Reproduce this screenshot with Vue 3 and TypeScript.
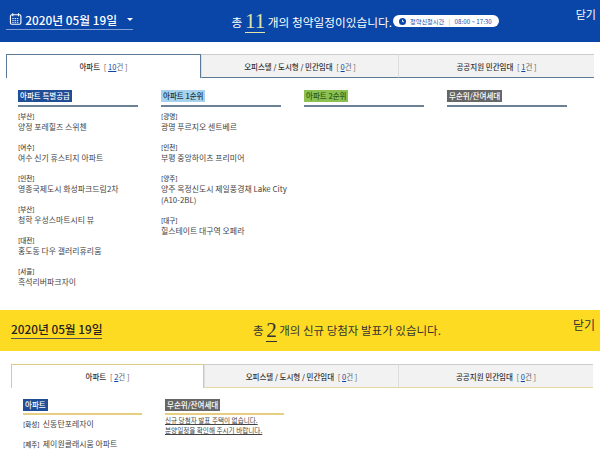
<template>
  <div class="page">
    <section class="band blue">
      <div class="date-select">
        <svg class="cal" width="14" height="14" viewBox="0 0 14 14" fill="none" stroke="#fff">
          <rect x="1.5" y="2.5" width="11" height="10" rx="1.5" stroke-width="1.2" />
          <path d="M4 1v3M10 1v3" stroke-width="1.2" />
          <path d="M3.5 6.5h7M3.5 8.5h7M3.5 10.5h7" stroke-width="1" stroke-dasharray="1.4 1" />
        </svg>
        <span>2020년 05월 19일</span>
        <i class="caret"></i>
      </div>
      <div class="summary">
        총 <b class="count">11</b> 개의 청약일정이있습니다.
        <span class="hours">
          <svg width="7" height="7" viewBox="0 0 8 8"><circle cx="4" cy="4" r="4" fill="#0a46a8" /><path d="M4 2v2.2h1.8" stroke="#fff" fill="none" /></svg>
          청약신청시간 <em>|</em> 08:00 ~ 17:30
        </span>
      </div>
      <span class="close">닫기</span>
    </section>

    <div class="panel first">
      <div class="tabs">
        <div v-for="(t, i) in blueTabs" :key="t.label" class="tab" :class="{ on: i === 0 }">
          {{ t.label }} <span class="n">[ <u>{{ t.n }}</u>건 ]</span>
        </div>
      </div>
      <div class="cols">
        <div v-for="c in blueCols" :key="c.title" class="col">
          <h4><span :class="c.tone">{{ c.title }}</span></h4>
          <div v-for="it in c.items" :key="it.name" class="item">
            <div class="region">[{{ it.region }}]</div>
            <div class="name">{{ it.name }}</div>
          </div>
        </div>
      </div>
    </div>

    <section class="band yellow">
      <div class="date-plain">2020년 05월 19일</div>
      <div class="summary">총 <b class="count">2</b> 개의 신규 당첨자 발표가 있습니다.</div>
      <span class="close">닫기</span>
    </section>

    <div class="panel second">
      <div class="tabs">
        <div v-for="(t, i) in yellowTabs" :key="t.label" class="tab" :class="{ on: i === 0 }">
          {{ t.label }} <span class="n">[ <u>{{ t.n }}</u>건 ]</span>
        </div>
      </div>
      <div class="cols">
        <div class="col">
          <h4><span class="navy">아파트</span></h4>
          <div class="row"><span class="region">[화성]</span> 신동탄포레자이</div>
          <div class="row"><span class="region">[제주]</span> 제이원클래시움 아파트</div>
        </div>
        <div class="col">
          <h4><span class="gray">무순위/잔여세대</span></h4>
          <p class="notice">신규 당첨자 발표 주택이 없습니다.<br />분양일정을 확인해 주시기 바랍니다.</p>
        </div>
      </div>
    </div>
  </div>
</template>

<script setup lang="ts">
interface Item {
  region: string;
  name: string;
}

const blueTabs = [
  { label: '아파트', n: 10 },
  { label: '오피스텔 / 도시형 / 민간임대', n: 0 },
  { label: '공공지원 민간임대', n: 1 }
];

const yellowTabs = [
  { label: '아파트', n: 2 },
  { label: '오피스텔 / 도시형 / 민간임대', n: 0 },
  { label: '공공지원 민간임대', n: 0 }
];

const blueCols: { title: string; tone: string; items: Item[] }[] = [
  {
    title: '아파트 특별공급',
    tone: 'navy',
    items: [
      { region: '부산', name: '양정 포레힐즈 스위첸' },
      { region: '여수', name: '여수 신기 휴스티지 아파트' },
      { region: '인천', name: '영종국제도시 화성파크드림2차' },
      { region: '부산', name: '청학 우성스마트시티 뷰' },
      { region: '대전', name: '홍도동 다우 갤러리휴리움' },
      { region: '서울', name: '흑석리버파크자이' }
    ]
  },
  {
    title: '아파트 1순위',
    tone: 'sky',
    items: [
      { region: '광명', name: '광명 푸르지오 센트베르' },
      { region: '인천', name: '부평 중앙하이츠 프리미어' },
      { region: '양주', name: '양주 옥정신도시 제일풍경채 Lake City (A10-2BL)' },
      { region: '대구', name: '힐스테이트 대구역 오페라' }
    ]
  },
  { title: '아파트 2순위', tone: 'green', items: [] },
  { title: '무순위/잔여세대', tone: 'gray', items: [] }
];
</script>

<style>
html,
body {
  margin: 0;
  background: #fff;
}
</style>

<style scoped>
.page {
  width: 600px;
  height: 455px;
  overflow: hidden;
  font-family: "Noto Sans CJK KR", "Liberation Sans", sans-serif;
  color: #444;
}

.band {
  position: relative;
  height: 42px;
  display: flex;
  align-items: center;
}

.blue {
  background: #0a46a8;
  color: #fff;
}

.yellow {
  height: 41px;
  background: #fedb23;
  color: #333;
}

.date-select {
  position: absolute;
  left: 6px;
  top: 9px;
  width: 127px;
  height: 21px;
  box-sizing: border-box;
  padding-left: 3px;
  display: flex;
  align-items: center;
  gap: 3px;
  font-size: 11.8px;
  font-weight: 500;
  white-space: nowrap;
  border-bottom: 1px solid #7f9fd6;
}

.caret {
  margin-left: 7px;
  border: 3px solid transparent;
  border-top: 3px solid #fff;
  border-bottom: 0;
}

.date-plain {
  position: absolute;
  left: 11px;
  top: 8px;
  width: 91px;
  height: 21px;
  font-size: 11.8px;
  font-weight: 500;
  line-height: 21px;
  white-space: nowrap;
  color: #222;
  border-bottom: 1px solid #555;
  box-sizing: border-box;
}

.summary {
  display: flex;
  align-items: center;
  font-size: 11.7px;
  white-space: pre;
}

.blue .summary {
  margin-left: 229px;
}

.yellow .summary {
  margin-left: 253px;
  margin-top: -1px;
  font-size: 11.5px;
}

.count {
  font-family: "Liberation Serif", serif;
  font-size: 21px;
  font-weight: 400;
  line-height: 22px;
  border-bottom: 1px solid currentColor;
}

.blue .count {
  color: #dfe6a8;
  font-size: 21px;
}

.hours {
  margin-left: -2px;
  height: 12px;
  padding: 0 6px;
  display: inline-flex;
  align-items: center;
  gap: 3px;
  border-radius: 6px;
  background: #fff;
  color: #0a46a8;
  font-size: 6.2px;
}

.hours em {
  font-style: normal;
  color: #aaa;
}

.close {
  position: absolute;
  right: 4px;
  top: 6px;
  font-size: 11px;
  line-height: 16px;
}

.yellow .close {
  right: 5px;
  top: 7px;
  font-size: 12px;
}

.tabs {
  display: grid;
  grid-template-columns: 195px 197px 1fr;
  height: 24px;
  margin-left: 6px;
  margin-right: 6px;
}

.tab {
  display: flex;
  align-items: center;
  justify-content: center;
  gap: 2px;
  font-size: 7.5px;
  font-weight: 500;
  color: #333;
  background: #f2f2f2;
  border-top: 1px solid #ccc;
  border-left: 1px solid #ddd;
  border-bottom: 1px solid #5c7a94;
  white-space: pre;
}

.tab.on {
  background: #fff;
  border: 1px solid #5c7a94;
  border-bottom: 0;
}

.n {
  font-weight: 400;
  color: #666;
}

.n u {
  color: #0a46a8;
}

.panel.first {
  padding-top: 12px;
  height: 268px;
  box-sizing: border-box;
}

.cols {
  display: flex;
  gap: 23px;
  padding: 12px 0 0 18px;
}

.col {
  width: 120px;
}

h4 {
  margin: 0 0 5px;
  height: 15px;
  border-bottom: 2px solid #6b8296;
  font-size: 7.5px;
  font-weight: 500;
  line-height: 12px;
}

h4 span {
  display: inline-block;
  padding: 0 2px;
}

.navy {
  background: #1f4e96;
  color: #fff;
}

.sky {
  background: #a5d3ee;
  color: #234;
}

.green {
  background: #8cc152;
  color: #2b5a16;
}

.gray {
  background: #666;
  color: #fff;
}

.item {
  margin-bottom: 11px;
  font-size: 7.9px;
  line-height: 11px;
}

.region {
  font-size: 6.5px;
  line-height: 9px;
  font-weight: 500;
  color: #444;
}

.name {
  margin-right: -6px;
  color: #444;
}

.panel.second {
  padding-top: 13px;
}

.second .tabs {
  margin-left: 11px;
  margin-right: 7px;
  grid-template-columns: 193px 194px 1fr;
}

.second .tab {
  border-bottom-color: #e6d9a0;
}

.second .tab.on {
  border-color: #dccb85;
  border-bottom: 0;
}

.second .cols {
  padding: 11px 0 0 23px;
}

.second h4 {
  margin-bottom: 0;
  height: 14px;
  border-bottom-color: #e6cf80;
}

.second .col {
  width: 119px;
}

.row {
  margin-top: 9px;
  height: 11px;
  font-size: 7.9px;
  line-height: 11px;
  white-space: nowrap;
}

.row:first-of-type {
  margin-top: 3px;
}

.row .region {
  margin-right: 1.5px;
}

.notice {
  margin: 0;
  font-size: 6.6px;
  line-height: 10px;
  text-decoration: underline;
  white-space: nowrap;
  color: #444;
}
</style>
